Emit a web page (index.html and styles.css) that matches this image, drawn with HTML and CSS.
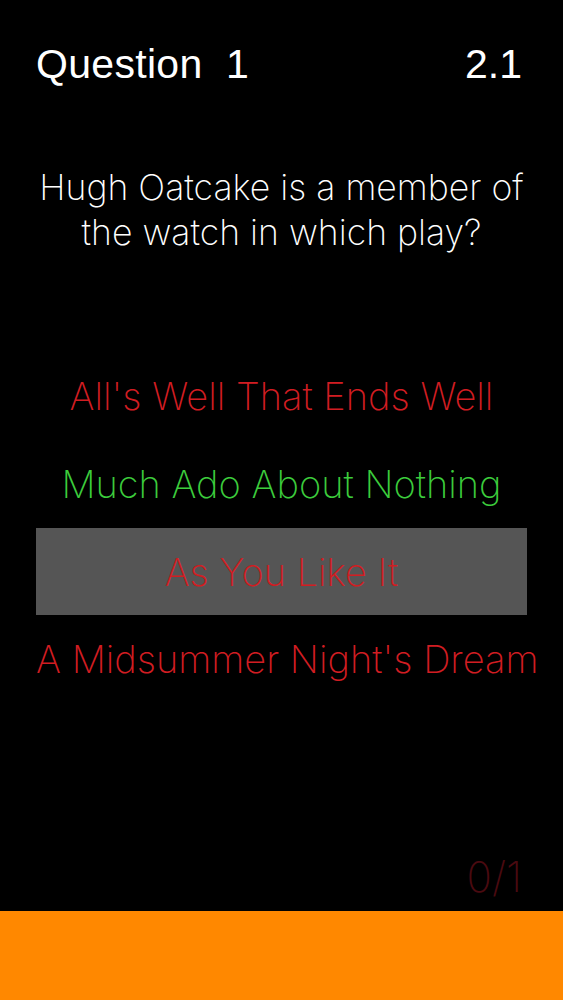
FILE: index.html
```html
<!DOCTYPE html>
<html>
<head>
<meta charset="utf-8">
<link rel="stylesheet" href="styles.css">
</head>
<body>
<div class="screen">
  <header class="top">
    <span class="qnum">Question&nbsp; 1</span>
    <span class="timer">2.1</span>
  </header>
  <p class="question">Hugh Oatcake is a member of<br>the watch in which play?</p>
  <ul class="answers">
    <li class="answer wrong">All's Well That Ends Well</li>
    <li class="answer right">Much Ado About Nothing</li>
    <li class="answer wrong selected">As You Like It</li>
    <li class="answer wrong">A Midsummer Night's Dream</li>
  </ul>
  <div class="spacer"></div>
  <div class="score">0/1</div>
  <div class="bar"></div>
</div>
</body>
</html>
```
FILE: styles.css
```css
html, body {
  margin: 0;
  padding: 0;
  background: #000;
}
.screen {
  width: 563px;
  height: 1000px;
  display: flex;
  flex-direction: column;
  background: #000;
  overflow: hidden;
}
.top {
  display: flex;
  justify-content: space-between;
  padding: 44px 41px 0 36px;
  font-family: "Liberation Sans", Arial, sans-serif;
  font-size: 41px;
  line-height: 40px;
  letter-spacing: 0.3px;
  color: #fff;
}
.timer {
  letter-spacing: 0;
}
.question {
  margin: 81px 0 0;
  text-align: center;
  font-family: "Inter", "Liberation Sans", sans-serif;
  font-weight: 200;
  font-size: 35.6px;
  line-height: 45px;
  color: #fff;
}
.answers {
  list-style: none;
  margin: 97px 0 0 36px;
  padding: 0;
  width: 491px;
  display: flex;
  flex-direction: column;
}
.answer {
  height: 88px;
  line-height: 88px;
  text-align: center;
  white-space: nowrap;
  font-family: "Inter", "Liberation Sans", sans-serif;
  font-weight: 200;
  font-size: 38px;
}
.wrong { color: #d11d22; }
.right { color: #3ccc3c; }
.selected { background: #555555; height: 87px; }
.spacer { flex: 1; }
.score {
  align-self: flex-end;
  padding-right: 41px;
  margin-bottom: 14px;
  font-family: "Inter", "Liberation Sans", sans-serif;
  font-weight: 200;
  font-size: 42px;
  line-height: 40px;
  color: #4a0a10;
}
.bar {
  height: 89px;
  background: #ff8800;
  flex: none;
}
```
